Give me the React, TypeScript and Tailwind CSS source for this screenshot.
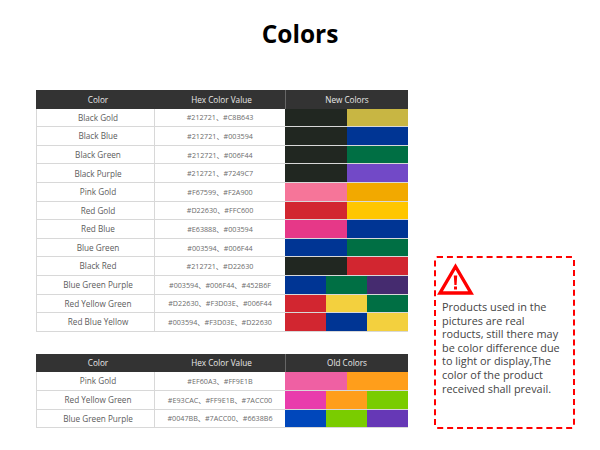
const font = { fontFamily: '"Open Sans", "Noto Sans CJK SC", sans-serif' }

interface Row {
  name: string
  hex: string
  swatches: string[]
}

const newColors: Row[] = [
  { name: "Black Gold", hex: "#212721、#C8B643", swatches: ["#212721", "#C8B643"] },
  { name: "Black Blue", hex: "#212721、#003594", swatches: ["#212721", "#003594"] },
  { name: "Black Green", hex: "#212721、#006F44", swatches: ["#212721", "#006F44"] },
  { name: "Black Purple", hex: "#212721、#7249C7", swatches: ["#212721", "#7249C7"] },
  { name: "Pink Gold", hex: "#F67599、#F2A900", swatches: ["#F67599", "#F2A900"] },
  { name: "Red Gold", hex: "#D22630、#FFC600", swatches: ["#D22630", "#FFC600"] },
  { name: "Red Blue", hex: "#E63888、#003594", swatches: ["#E63888", "#003594"] },
  { name: "Blue Green", hex: "#003594、#006F44", swatches: ["#003594", "#006F44"] },
  { name: "Black Red", hex: "#212721、#D22630", swatches: ["#212721", "#D22630"] },
  { name: "Blue Green Purple", hex: "#003594、#006F44、#452B6F", swatches: ["#003594", "#006F44", "#452B6F"] },
  { name: "Red Yellow Green", hex: "#D22630、#F3D03E、#006F44", swatches: ["#D22630", "#F3D03E", "#006F44"] },
  { name: "Red Blue Yellow", hex: "#003594、#F3D03E、#D22630", swatches: ["#D22630", "#003594", "#F3D03E"] },
]

const oldColors: Row[] = [
  { name: "Pink Gold", hex: "#EF60A3、#FF9E1B", swatches: ["#EF60A3", "#FF9E1B"] },
  { name: "Red Yellow Green", hex: "#E93CAC、#FF9E1B、#7ACC00", swatches: ["#E93CAC", "#FF9E1B", "#7ACC00"] },
  { name: "Blue Green Purple", hex: "#0047BB、#7ACC00、#6638B6", swatches: ["#0047BB", "#7ACC00", "#6638B6"] },
]

function ColorTable({ title, rows }: { title: string; rows: Row[] }) {
  return (
    <div className="w-[372px]">
      <div className="grid h-[18.6px] grid-cols-[119px_130px_123px] items-center bg-[#333333] text-center text-[8.2px] text-[#e8e8e8]">
        <div className="pl-[5px] pt-px">Color</div>
        <div className="pl-[3px] pt-px">Hex Color Value</div>
        <div className="flex h-full items-center justify-center border-l border-[#666666] pt-px">{title}</div>
      </div>
      {rows.map((row) => (
        <div
          key={row.name}
          className="grid h-[18.6px] grid-cols-[119px_130px_123px] items-stretch border-b border-[#d8d8d8] text-center"
        >
          <div className="flex items-center justify-center border-x border-[#d8d8d8] pl-[5px] pt-px text-[8.2px] text-[#5c5c5c]">
            {row.name}
          </div>
          <div className="flex items-center justify-center pt-px text-[7.2px] text-[#6c6c6c]">{row.hex}</div>
          <div className="flex">
            {row.swatches.map((color) => (
              <div key={color} className="flex-1" style={{ backgroundColor: color }} />
            ))}
          </div>
        </div>
      ))}
    </div>
  )
}

export default function App() {
  return (
    <div className="flex h-[450px] w-[600px] flex-col bg-white" style={font}>
      <h1 className="mt-[16px] h-[36px] text-center text-[24.5px] font-bold leading-[36px] text-black">Colors</h1>
      <div className="mt-[38px] flex items-end pl-[36px]">
        <div className="flex flex-col gap-[22px]">
          <ColorTable title="New Colors" rows={newColors} />
          <ColorTable title="Old Colors" rows={oldColors} />
        </div>
        <div className="mb-[-1px] ml-[26px] h-[173px] w-[141px] rounded-[3px] border-2 border-dashed border-[#ff0000] pl-[6px] pt-[5px]">
          <svg width="37" height="33" viewBox="0 0 37 33" className="-ml-[5px]">
            <path d="M18.5 3.5 L34 30 L3 30 Z" fill="none" stroke="#ff0000" strokeWidth="3.4" />
            <path d="M16.8 12.5 h3.4 l-0.6 9.5 h-2.2 Z M17 23.5 h3 v3 h-3 Z" fill="#ff0000" />
          </svg>
          <p className="mt-[4px] w-[126px] text-[10.9px] leading-[13.6px] text-[#444444]">
            Products used in the pictures are real roducts, still there may be color difference due to light or display,The color of the product received shall prevail.
          </p>
        </div>
      </div>
    </div>
  )
}
